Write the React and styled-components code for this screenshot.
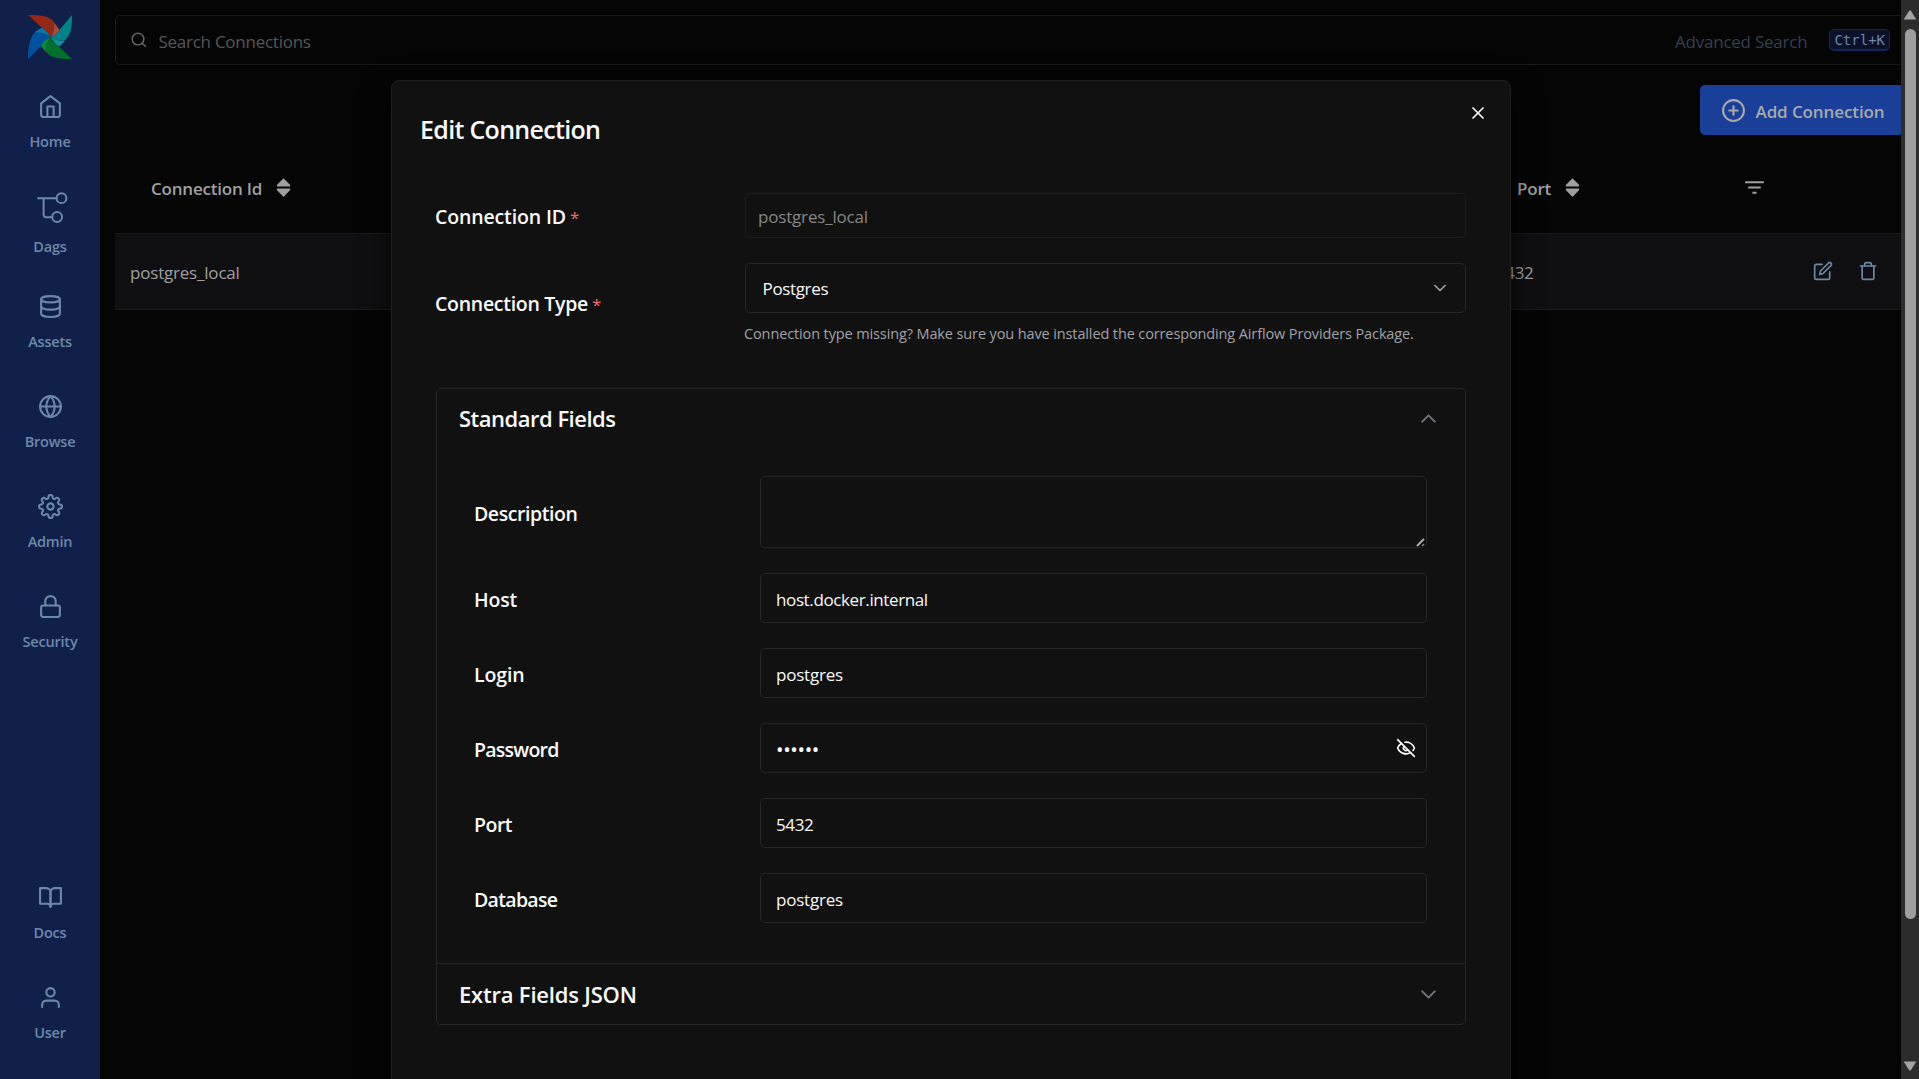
import React from "react";
import styled, { createGlobalStyle } from "styled-components";
import {
  FiHome, FiDatabase, FiGlobe, FiSettings, FiLock, FiBookOpen, FiUser,
  FiSearch, FiPlusCircle, FiEdit, FiTrash, FiChevronDown, FiChevronUp,
} from "react-icons/fi";
import { MdFilterList } from "react-icons/md";
import { TiArrowUnsorted } from "react-icons/ti";
import { EyeOff, X } from "lucide-react";

const GlobalStyle = createGlobalStyle`
  *, *::before, *::after { box-sizing: border-box; }
  body {
    margin: 0;
    background: #050505;
    overflow: hidden;
    font-family: "Open Sans", "Noto Sans", sans-serif;
    -webkit-font-smoothing: antialiased;
  }
  svg { display: block; flex: none; }
  input, textarea, button { font: inherit; }
`;

const Page = styled.div`
  position: relative;
  display: flex;
  width: 1919px;
  height: 1079px;
  overflow: hidden;
  background: #050505;
`;

/* ---------- sidebar ---------- */

const Sidebar = styled.nav`
  display: flex;
  flex-direction: column;
  justify-content: space-between;
  flex: none;
  width: 100px;
  padding: 15px 0;
  background: #11204b;
`;

const NavGroup = styled.div`
  display: flex;
  flex-direction: column;
  align-items: stretch;
`;

const LogoBox = styled.div`
  display: flex;
  justify-content: center;
  height: 58px;
`;

const NavItem = styled.a`
  display: flex;
  flex-direction: column;
  align-items: center;
  justify-content: center;
  gap: 13px;
  height: 100px;
  padding-left: 1px;
  color: #6c88a9;
`;

const NavLabel = styled.span`
  margin-left: -1px;
  font-size: 14.5px;
  font-weight: 600;
  line-height: 20px;
  letter-spacing: -0.2px;
`;

/* ---------- main area ---------- */

const Main = styled.main`
  display: flex;
  flex-direction: column;
  flex: 1;
  min-width: 0;
  padding: 15px 15px 0;
`;

const SearchBar = styled.div`
  display: flex;
  align-items: center;
  height: 50px;
  padding: 0 13px 0 14px;
  border: 1px solid #1a1a1b;
  border-radius: 5px;
  color: #68686c;
`;

const SearchPlaceholder = styled.span`
  flex: 1;
  padding: 3px 0 0 11px;
  font-size: 17px;
  line-height: 24px;
  letter-spacing: -0.26px;
  color: #56565a;
`;

const AdvancedSearch = styled.span`
  padding-top: 3px;
  margin-right: 22px;
  font-size: 17px;
  line-height: 24px;
  letter-spacing: -0.23px;
  color: #34404f;
`;

const Shortcut = styled.kbd`
  height: 22px;
  margin-top: -1px;
  padding: 0 4px;
  border: 1px solid #14245c;
  border-bottom-width: 2px;
  border-radius: 5px;
  background: #0a1129;
  color: #6c88b0;
  font-family: "DejaVu Sans Mono", monospace;
  font-size: 14px;
  line-height: 20px;
`;

const Toolbar = styled.div`
  display: flex;
  justify-content: flex-end;
  padding-top: 20px;
`;

const AddButton = styled.button`
  display: flex;
  align-items: center;
  gap: 9.5px;
  width: 204px;
  height: 50px;
  padding: 0 0 0 21px;
  border: 0;
  border-radius: 5px;
  background: #193f98;
  color: #a9a9ab;
  font-size: 17px;
  font-weight: 600;
  letter-spacing: -0.1px;
  white-space: nowrap;
  span { padding-top: 2px; }
`;

const TableHead = styled.div`
  display: flex;
  align-items: center;
  height: 98px;
  padding: 7px 0 0 36px;
`;

const HeadCell = styled.div`
  display: flex;
  align-items: center;
  gap: 9px;
  flex: none;
  width: ${(p) => p.$width}px;
  color: #a0a0a2;
  font-size: 17px;
  font-weight: 600;
  line-height: 24px;
  letter-spacing: -0.2px;
  span { padding-top: 2px; }
`;

const TableRow = styled.div`
  display: flex;
  align-items: center;
  height: 77px;
  padding-left: 15px;
  border-top: 1px solid #19191a;
  border-bottom: 1px solid #19191a;
  background: #0f0f11;
`;

const Cell = styled.div`
  flex: none;
  width: ${(p) => p.$width}px;
  padding-top: 2px;
  color: #a0a0a2;
  font-size: 17px;
  line-height: 24px;
  letter-spacing: ${(p) => p.$tracking}px;
`;

const RowActions = styled.div`
  display: flex;
  gap: 25px;
  padding-bottom: 2px;
  color: #6c88a9;
`;

/* ---------- window scroll bar ---------- */

const ScrollTrack = styled.div`
  position: absolute;
  top: 0;
  right: 0;
  display: flex;
  flex-direction: column;
  align-items: center;
  justify-content: space-between;
  width: 18px;
  height: 1079px;
  padding: 10px 0 8px;
  background: #2c2c2c;
`;

const ScrollThumb = styled.div`
  width: 11px;
  height: 890px;
  margin-bottom: 133px;
  border-radius: 6px;
  background: #9f9f9f;
`;

/* ---------- dialog ---------- */

const Dialog = styled.section`
  position: absolute;
  top: 80px;
  left: 391px;
  width: 1120px;
  height: 1100px;
  padding: 0 44px;
  border: 1px solid #1f1f20;
  border-radius: 8px;
  background: #111111;
  box-shadow: 0 10px 30px rgba(0, 0, 0, 0.64);
`;

const DialogHeader = styled.header`
  display: flex;
  align-items: flex-start;
  justify-content: space-between;
  height: 112px;
  margin: 0 -22px 0 -16px;
  padding: 22px 0 0 0;
  color: #fafafa;
`;

const DialogTitle = styled.h2`
  margin: 7px 0 0;
  font-size: 25px;
  font-weight: 600;
  line-height: 39px;
  letter-spacing: -0.69px;
`;

const CloseButton = styled.button`
  display: flex;
  padding: 0;
  border: 0;
  background: none;
  color: inherit;
`;

const Stack = styled.div`
  display: flex;
  flex-direction: column;
  gap: 25px;
  margin-left: -1px;
`;

const Field = styled.div`
  display: flex;
  align-items: center;
`;

const Label = styled.label`
  flex: none;
  width: ${(p) => p.$width || 286}px;
  padding-top: ${(p) => p.$drop ?? 3}px;
  color: #fafafa;
  font-size: 19.5px;
  font-weight: 600;
  line-height: 26px;
  letter-spacing: ${(p) => p.$tracking || -0.35}px;
`;

const Required = styled.span`
  margin-left: 4px;
  color: #f06a6a;
  font-size: 17px;
  font-weight: 400;
`;

const Control = styled.div`
  position: relative;
  display: flex;
  flex-direction: column;
  flex: 1;
`;

const Input = styled.input`
  width: 100%;
  height: ${(p) => p.$height || 50}px;
  padding: ${(p) => (p.disabled ? "1px 12px 0" : "3px 15px 0")};
  border: 1px solid ${(p) => (p.disabled ? "#1c1c1e" : "#27272a")};
  border-radius: 5px;
  outline: 0;
  background: transparent;
  color: ${(p) => (p.disabled ? "#868686" : "#fafafa")};
  font-size: 17px;
  letter-spacing: ${(p) => p.$tracking || -0.22}px;
`;

const PasswordInput = styled(Input)`
  padding-top: 3px;
  font-size: 20px;
  letter-spacing: -0.35px;
`;

const TextArea = styled.textarea`
  display: block;
  width: 100%;
  height: 72px;
  border: 1px solid #27272a;
  border-radius: 5px;
  outline: 0;
  background: transparent;
  color: #fafafa;
  resize: none;
`;

const ResizeGrip = styled.svg`
  position: absolute;
  right: 2px;
  bottom: 1px;
`;

const Select = styled.div`
  display: flex;
  align-items: center;
  justify-content: space-between;
  height: 50px;
  padding: 0 15px 0 16.5px;
  border: 1px solid #27272a;
  border-radius: 5px;
  color: #fafafa;
  font-size: 17px;
  line-height: 24px;
  letter-spacing: -0.35px;
  span { padding-top: 1px; }
  svg { color: #a1a1aa; }
`;

const Helper = styled.p`
  margin: 10px 0 0 -1px;
  color: #a1a1aa;
  font-size: 14.5px;
  line-height: 22px;
  letter-spacing: -0.12px;
`;

const EyeButton = styled.button`
  position: absolute;
  top: 15px;
  right: 11.5px;
  padding: 0;
  border: 0;
  background: none;
  color: #fafafa;
`;

const Accordion = styled.div`
  margin-top: 43px;
  border: 1px solid #27272a;
  border-radius: 5px;
`;

const AccordionTrigger = styled.div`
  display: flex;
  align-items: center;
  justify-content: space-between;
  height: 61px;
  padding: 0 24px ${(p) => (p.$divided ? 0 : 2)}px 22px;
  border-top: ${(p) => (p.$divided ? "1px solid #27272a" : "0")};
  color: #fafafa;
  font-size: 22px;
  font-weight: 600;
  line-height: 30px;
  letter-spacing: ${(p) => p.$tracking}px;
  span { padding-bottom: ${(p) => (p.$divided ? 0 : 2)}px; }
  svg { color: #71717a; }
`;

const AccordionBody = styled.div`
  display: flex;
  flex-direction: column;
  gap: 25px;
  padding: 26px 38px 40px 37px;
`;

/* ---------- drawings ---------- */

const Pinwheel = () => (
  <svg width="44" height="44" viewBox="0 0 132 132">
    <path fill="#0052a0" d="M0 132 C0 100 4 68 22 50 C38 52 56 58 68 67 L39 93 Z" />
    <path fill="#0778aa" d="M20 53 C28 45 34 42 42 38 C52 42 62 54 68 67 C54 57 38 51 20 53 Z" />
    <path fill="#962816" d="M0 0 C42 0 64 4 78 21 C82 36 78 54 68 67 C62 54 52 44 42 38 Z" />
    <path fill="#a84e3a" d="M76 20 C84 30 90 38 95 45 C90 56 80 60 68 67 C78 52 82 36 76 20 Z" />
    <path fill="#00828a" d="M132 0 C132 34 130 58 111 76 C94 78 80 75 68 67 C80 60 90 56 95 44 Z" />
    <path fill="#0b949c" d="M111 76 C105 84 99 90 93 94 C84 90 76 80 68 67 C82 76 96 79 111 76 Z" />
    <path fill="#00702c" d="M132 132 C90 132 68 128 54 110 C51 96 56 80 68 67 C74 80 82 90 93 95 Z" />
    <path fill="#048c3a" d="M54 111 C47 103 43 98 39 92 C44 81 54 72 68 67 C56 80 52 96 54 111 Z" />
    <circle cx="68" cy="67" r="2.5" fill="#3a3f3f" />
  </svg>
);

const DagIcon = () => (
  <svg width="35" height="35" viewBox="0 0 35 35" fill="none" stroke="currentColor" strokeWidth="2">
    <path d="M4.2 9.2H23.6M10.6 9.2V25.6a2.6 2.6 0 0 0 2.6 2.6H19.4" />
    <circle cx="28.5" cy="9.2" r="4.9" />
    <circle cx="24.1" cy="28" r="4.9" />
  </svg>
);

const Grip = () => (
  <ResizeGrip width="9" height="9" viewBox="0 0 9 9">
    <path d="M0.5 8.5L8.5 0.5V8.5Z" fill="#050505" />
    <path d="M1 8L8 1" stroke="#b0b0b0" strokeWidth="2" />
    <path d="M6 8L8 6" stroke="#8a8a8a" strokeWidth="1.6" />
  </ResizeGrip>
);

const ScrollArrow = ({ down }) => (
  <svg width="14" height="10" viewBox="0 0 14 10">
    <path
      d={down ? "M0.7 0.5H13.3L8 9Q7 10.4 6 9Z" : "M0.7 9.5H13.3L8 1Q7 -0.4 6 1Z"}
      fill="#a3a3a3"
    />
  </svg>
);

/* ---------- page ---------- */

const topNav = [
  { label: "Home", icon: <FiHome size={25} /> },
  { label: "Dags", icon: <DagIcon /> },
  { label: "Assets", icon: <FiDatabase size={25} /> },
  { label: "Browse", icon: <FiGlobe size={25} /> },
  { label: "Admin", icon: <FiSettings size={25} /> },
  { label: "Security", icon: <FiLock size={25} /> },
];

const bottomNav = [
  { label: "Docs", icon: <FiBookOpen size={25} /> },
  { label: "User", icon: <FiUser size={25} /> },
];

const Nav = ({ items }) =>
  items.map(({ label, icon }) => (
    <NavItem key={label}>
      {icon}
      <NavLabel>{label}</NavLabel>
    </NavItem>
  ));

const StandardField = ({ label, tracking, children }) => (
  <Field>
    <Label $tracking={tracking}>{label}</Label>
    <Control>{children}</Control>
  </Field>
);

export default function App() {
  return (
    <>
      <GlobalStyle />
      <Page>
        <Sidebar>
          <NavGroup>
            <LogoBox><Pinwheel /></LogoBox>
            <Nav items={topNav} />
          </NavGroup>
          <NavGroup><Nav items={bottomNav} /></NavGroup>
        </Sidebar>

        <Main>
          <SearchBar>
            <FiSearch size={17.5} />
            <SearchPlaceholder>Search Connections</SearchPlaceholder>
            <AdvancedSearch>Advanced Search</AdvancedSearch>
            <Shortcut>Ctrl+K</Shortcut>
          </SearchBar>
          <Toolbar>
            <AddButton><FiPlusCircle size={25} /><span>Add Connection</span></AddButton>
          </Toolbar>
          <TableHead>
            <HeadCell $width={1366}><span>Connection Id</span><TiArrowUnsorted size={25} /></HeadCell>
            <HeadCell $width={225}><span>Port</span><TiArrowUnsorted size={25} /></HeadCell>
            <MdFilterList size={25} color="#a0a0a2" />
          </TableHead>
          <TableRow>
            <Cell $width={1366} $tracking={-0.2}>postgres_local</Cell>
            <Cell $width={317} $tracking={-0.4}>5432</Cell>
            <RowActions><FiEdit size={20} /><FiTrash size={20} /></RowActions>
          </TableRow>
        </Main>

        <Dialog>
          <DialogHeader>
            <DialogTitle>Edit Connection</DialogTitle>
            <CloseButton><X size={20} /></CloseButton>
          </DialogHeader>
          <Stack>
            <Field>
              <Label $width={310} $tracking={-0.14}>Connection ID<Required>*</Required></Label>
              <Control><Input $height={45} $tracking={-0.18} defaultValue="postgres_local" disabled /></Control>
            </Field>
            <Field>
              <Label $width={310} $tracking={-0.29} $drop={0}>Connection Type<Required>*</Required></Label>
              <Control>
                <Select><span>Postgres</span><FiChevronDown size={20} /></Select>
                <Helper>
                  Connection type missing? Make sure you have installed the corresponding Airflow Providers Package.
                </Helper>
              </Control>
            </Field>
          </Stack>
          <Accordion>
            <AccordionTrigger $tracking={-0.5}>
              <span>Standard Fields</span><FiChevronUp size={25} />
            </AccordionTrigger>
            <AccordionBody>
              <StandardField label="Description" tracking={-0.43}><TextArea /><Grip /></StandardField>
              <StandardField label="Host" tracking={-0.2}>
                <Input defaultValue="host.docker.internal" $tracking={-0.38} />
              </StandardField>
              <StandardField label="Login" tracking={-0.12}><Input defaultValue="postgres" /></StandardField>
              <StandardField label="Password" tracking={-0.75}>
                <PasswordInput type="password" defaultValue="secret" />
                <EyeButton><EyeOff size={20} /></EyeButton>
              </StandardField>
              <StandardField label="Port" tracking={-0.5}>
                <Input defaultValue="5432" $tracking={-0.4} />
              </StandardField>
              <StandardField label="Database" tracking={-0.68}><Input defaultValue="postgres" /></StandardField>
            </AccordionBody>
            <AccordionTrigger $divided $tracking={-0.2}>
              <span>Extra Fields JSON</span><FiChevronDown size={25} />
            </AccordionTrigger>
          </Accordion>
        </Dialog>

        <ScrollTrack>
          <ScrollArrow />
          <ScrollThumb />
          <ScrollArrow down />
        </ScrollTrack>
      </Page>
    </>
  );
}
